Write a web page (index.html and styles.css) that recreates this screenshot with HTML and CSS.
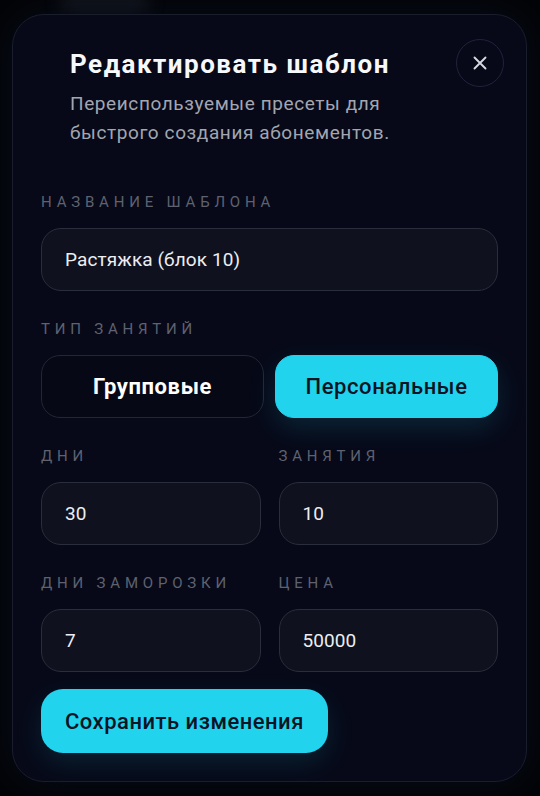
FILE: index.html
```html
<!DOCTYPE html>
<html lang="ru">
<head>
<meta charset="utf-8">
<title>Редактировать шаблон</title>
<link rel="stylesheet" href="styles.css">
</head>
<body>
<div class="backdrop-blur"></div>
<section class="card">
  <header class="header">
    <div class="titles">
      <h1 class="title">Редактировать шаблон</h1>
      <p class="subtitle">Переиспользуемые пресеты для быстрого создания абонементов.</p>
    </div>
    <button class="close" type="button" aria-label="Закрыть">
      <svg width="18" height="18" viewBox="0 0 18 18" fill="none">
        <path d="M3.5 3.5L14.5 14.5M14.5 3.5L3.5 14.5" stroke="#d6d9e0" stroke-width="1.9" stroke-linecap="round"/>
      </svg>
    </button>
  </header>

  <form class="form">
    <div class="field">
      <div class="label">Название шаблона</div>
      <div class="input">Растяжка (блок 10)</div>
    </div>

    <div class="field">
      <div class="label">Тип занятий</div>
      <div class="toggle">
        <div class="opt">Групповые</div>
        <div class="opt opt-active">Персональные</div>
      </div>
    </div>

    <div class="row">
      <div class="field">
        <div class="label">Дни</div>
        <div class="input">30</div>
      </div>
      <div class="field">
        <div class="label">Занятия</div>
        <div class="input">10</div>
      </div>
    </div>

    <div class="row">
      <div class="field">
        <div class="label">Дни заморозки</div>
        <div class="input">7</div>
      </div>
      <div class="field">
        <div class="label">Цена</div>
        <div class="input">50000</div>
      </div>
    </div>

    <div class="actions">
      <button class="save" type="button">Сохранить изменения</button>
    </div>
  </form>
</section>
</body>
</html>
```

FILE: styles.css
```css
* { box-sizing: border-box; }

html, body {
  margin: 0;
  padding: 0;
  background: #030407;
  width: 540px;
  height: 796px;
  overflow: hidden;
}

body {
  font-family: Roboto, "Noto Sans", "Liberation Sans", sans-serif;
  color: #ffffff;
  padding-top: 14px;
  padding-left: 12px;
  position: relative;
}

.backdrop-blur {
  position: absolute;
  left: 60px;
  top: -10px;
  width: 90px;
  height: 24px;
  border-radius: 12px;
  background: #14161d;
  filter: blur(8px);
  opacity: 0.8;
}

.card {
  position: relative;
  width: 515px;
  height: 768px;
  background: #070918;
  border: 1px solid #1a1d2b;
  border-radius: 32px;
  padding: 32px 28px 28px 28px;
  display: flex;
  flex-direction: column;
  box-shadow: 0 0 40px rgba(20, 40, 70, 0.25);
}

.header {
  display: flex;
  justify-content: space-between;
  align-items: flex-start;
  margin-right: -6px;
}

.titles {
  padding-left: 29px;
}

.title {
  margin: 0;
  font-size: 26px;
  line-height: 34px;
  font-weight: 700;
  letter-spacing: 1.5px;
  color: #f7f8fa;
}

.subtitle {
  margin: 8px 0 0 0;
  font-size: 19px;
  line-height: 29px;
  letter-spacing: 0.6px;
  color: #a2a6b1;
  width: 345px;
}

.close {
  width: 48px;
  height: 48px;
  margin-top: -8px;
  border-radius: 50%;
  border: 1px solid #20233a;
  background: transparent;
  display: flex;
  align-items: center;
  justify-content: center;
  padding: 0;
}

.form {
  margin: 45px 0 0 0;
  display: flex;
  flex-direction: column;
  gap: 28px;
}

.field {
  display: flex;
  flex-direction: column;
  min-width: 0;
}

.label {
  font-size: 15px;
  line-height: 20px;
  letter-spacing: 4.8px;
  text-transform: uppercase;
  color: #5e6270;
  margin-bottom: 16px;
  white-space: nowrap;
}

.input {
  height: 63px;
  border-radius: 20px;
  background: #0f111e;
  border: 1px solid #2a2d3b;
  padding: 0 23px;
  display: flex;
  align-items: center;
  font-size: 19px;
  letter-spacing: 0.1px;
  color: #eceef2;
}

.toggle {
  display: grid;
  grid-template-columns: 1fr 1fr;
  gap: 11px;
}

.opt {
  height: 63px;
  border-radius: 19px;
  border: 1px solid #232636;
  background: #060816;
  display: flex;
  align-items: center;
  justify-content: center;
  font-size: 22px;
  letter-spacing: 0.6px;
  font-weight: 700;
  color: #ffffff;
}

.opt-active {
  background: #22d3ee;
  border-color: #22d3ee;
  color: #0b1424;
  font-weight: 500;
  box-shadow: 0 10px 28px rgba(34, 211, 238, 0.14);
}

.row {
  display: grid;
  grid-template-columns: 1fr 1fr;
  gap: 18px;
}

.actions {
  margin-top: -11px;
  display: flex;
}

.save {
  height: 64px;
  border: none;
  border-radius: 22px;
  background: #22d3ee;
  color: #0b1424;
  font-family: Roboto, "Noto Sans", "Liberation Sans", sans-serif;
  font-size: 22px;
  letter-spacing: 0.5px;
  font-weight: 500;
  padding: 0 24px;
  box-shadow: 0 10px 28px rgba(34, 211, 238, 0.12);
}
```
